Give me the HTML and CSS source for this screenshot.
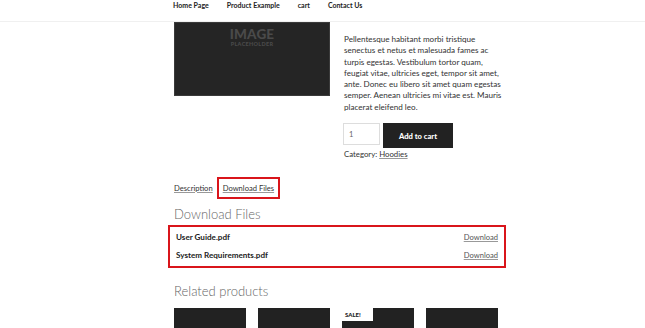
FILE: index.html
```html
<!DOCTYPE html>
<html>
<head>
<meta charset="utf-8">
<link rel="stylesheet" href="styles.css">
</head>
<body>
<nav class="topnav">
  <div class="navlist">
    <a class="navlink">Home Page</a>
    <a class="navlink">Product Example</a>
    <a class="navlink">cart</a>
    <a class="navlink">Contact Us</a>
  </div>
</nav>
<main class="wrap">
  <section class="product">
    <div class="gallery">
      <div class="ph">
        <span class="ph-big">IMAGE</span>
        <span class="ph-small">PLACEHOLDER</span>
      </div>
    </div>
    <div class="summary">
      <p class="desc">Pellentesque habitant morbi tristique senectus et netus et malesuada fames ac turpis egestas. Vestibulum tortor quam, feugiat vitae, ultricies eget, tempor sit amet, ante. Donec eu libero sit amet quam egestas semper. Aenean ultricies mi vitae est. Mauris placerat eleifend leo.</p>
      <form class="cart">
        <div class="qty">1</div>
        <button class="btn" type="button">Add to cart</button>
      </form>
      <div class="meta">Category: <a class="ul">Hoodies</a></div>
    </div>
  </section>
  <div class="tabs">
    <a class="tab ul">Description</a>
    <a class="tab ul active">Download Files</a>
  </div>
  <h2 class="h2">Download Files</h2>
  <div class="files">
    <div class="file"><span class="fname">User Guide.pdf</span><a class="dl ul">Download</a></div>
    <div class="file"><span class="fname">System Requirements.pdf</span><a class="dl ul">Download</a></div>
  </div>
  <h2 class="h2 related">Related products</h2>
  <div class="products">
    <div class="pbox"></div>
    <div class="pbox"></div>
    <div class="pbox"><span class="sale">SALE!</span></div>
    <div class="pbox"></div>
  </div>
</main>
</body>
</html>
```
FILE: styles.css
```css
html, body { margin: 0; padding: 0; background: #fff; }
body { font-family: Lato, "Liberation Sans", sans-serif; color: #333; overflow: hidden; height: 328px; }
a { color: #333; text-decoration: none; }
.ul { text-decoration: underline; text-decoration-color: #999; text-underline-offset: 1px; }

.topnav { height: 21px; border-bottom: 1px solid #f0f0f0; }
.navlist { display: flex; gap: 18px; padding-left: 173px; }
.navlink { font-size: 7px; font-weight: 700; color: #222; line-height: 11px; }

.wrap { width: 326px; margin-left: 174px; }
.product { display: flex; gap: 14px; align-items: flex-start; }
.gallery { width: 156px; flex: none; }
.ph { height: 74px; box-sizing: border-box; background: #252525; border: 1px solid #3a3a3a; display: flex; flex-direction: column; align-items: center; padding-top: 4px; }
.ph-big { font-size: 13.5px; font-weight: 900; color: #4a4a4a; line-height: 14px; letter-spacing: 0.2px; }
.ph-small { font-size: 5.5px; font-weight: 900; color: #4a4a4a; line-height: 6px; letter-spacing: 0.3px; }

.summary { width: 158px; flex: none; padding-top: 12px; }
.desc { margin: 0; font-size: 8.1px; line-height: 11.3px; color: #333; }
.cart { display: flex; gap: 3px; margin: 10px 0 0 -1px; align-items: flex-start; }
.qty { width: 37px; height: 22px; box-sizing: border-box; border: 1px solid #ddd; font-size: 7.5px; color: #666; padding: 6px 0 0 5px; }
.btn { width: 70px; height: 25px; border: 0; background: #222; color: #fff; font-family: inherit; font-size: 7.6px; font-weight: 900; padding: 0; }
.meta { font-size: 7.8px; line-height: 11px; margin-top: 1px; color: #333; }

.tabs { display: flex; gap: 6px; margin-top: 19px; align-items: center; }
.tab { font-size: 7.6px; color: #333; line-height: 14px; padding: 0 0 1px; }
.tab.active { outline: 2px solid #d9151b; padding: 2px 4px; }

.h2 { margin: 8px 0 0; font-size: 13px; font-weight: 300; color: #666; line-height: 18px; }
.files { border: 2px solid #d9151b; margin: 2px -6px 0 -6px; padding: 1px 6px 2px; }
.file { display: flex; justify-content: space-between; align-items: center; height: 18px; }
.fname { font-size: 8.1px; font-weight: 700; color: #222; }
.dl { font-size: 7.6px; color: #555; }

.related { margin-top: 14px; font-size: 13px; }
.products { display: flex; gap: 12px; margin-top: 8px; }
.pbox { width: 72px; height: 30px; background: #222; position: relative; flex: none; }
.sale { position: absolute; left: 0; top: 0; width: 31px; height: 13px; box-sizing: border-box; background: #fff; color: #222; font-size: 6px; font-weight: 900; padding: 3px 0 0 3px; line-height: 8px; }
```
